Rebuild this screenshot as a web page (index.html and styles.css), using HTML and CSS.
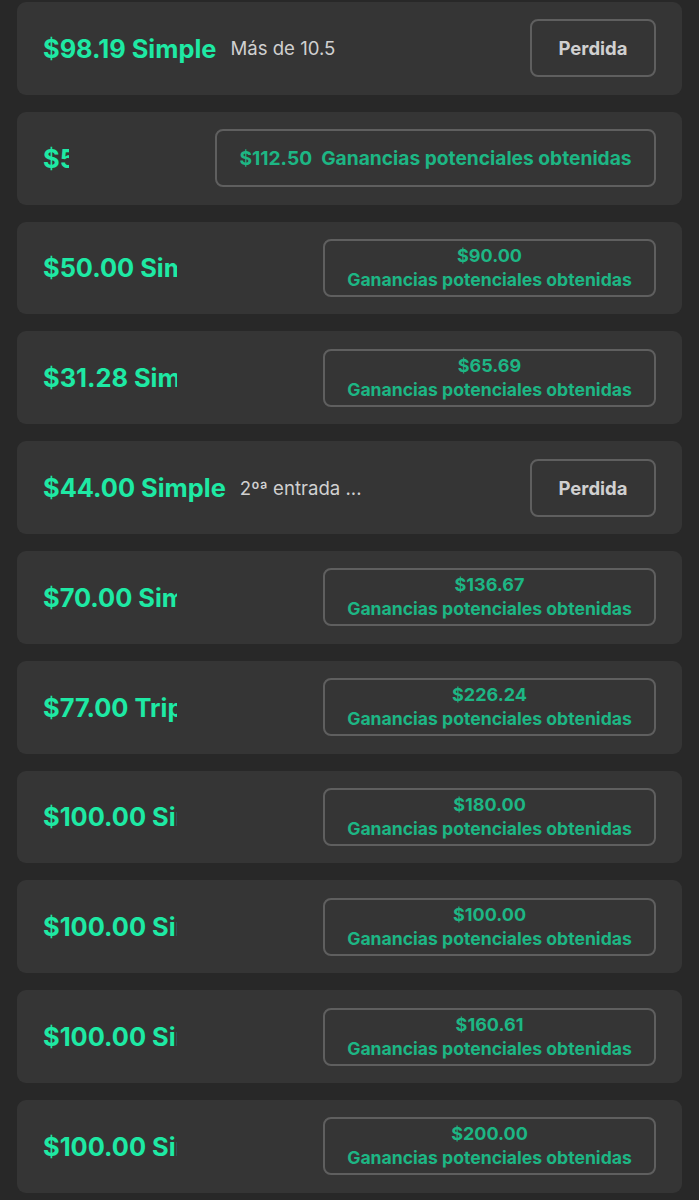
FILE: index.html
```html
<!DOCTYPE html>
<html lang="es">
<head>
  <meta charset="UTF-8">
  <meta name="viewport" content="width=device-width, initial-scale=1.0">
  <title>Mis apuestas</title>
  <link rel="stylesheet" href="styles.css">
</head>
<body>
  <div class="bet-list">
    <div class="bet-card">
      <div class="bet-title">$98.19 Simple</div>
      <div class="bet-sub">Más de 10.5</div>
      <div class="bet-status lost">Perdida</div>
    </div>

    <div class="bet-card won">
      <div class="bet-title clip">$50.00 Simple</div>
      <div class="bet-status win inline">$112.50&nbsp; Ganancias potenciales obtenidas</div>
    </div>

    <div class="bet-card won">
      <div class="bet-title clip">$50.00 Simple</div>
      <div class="bet-status win">
        <span class="win-amount">$90.00</span>
        <span class="win-label">Ganancias potenciales obtenidas</span>
      </div>
    </div>

    <div class="bet-card won">
      <div class="bet-title clip">$31.28 Simple</div>
      <div class="bet-status win">
        <span class="win-amount">$65.69</span>
        <span class="win-label">Ganancias potenciales obtenidas</span>
      </div>
    </div>

    <div class="bet-card">
      <div class="bet-title">$44.00 Simple</div>
      <div class="bet-sub">2ºª entrada ...</div>
      <div class="bet-status lost">Perdida</div>
    </div>

    <div class="bet-card won">
      <div class="bet-title clip">$70.00 Simple</div>
      <div class="bet-status win">
        <span class="win-amount">$136.67</span>
        <span class="win-label">Ganancias potenciales obtenidas</span>
      </div>
    </div>

    <div class="bet-card won">
      <div class="bet-title clip">$77.00 Triple</div>
      <div class="bet-status win">
        <span class="win-amount">$226.24</span>
        <span class="win-label">Ganancias potenciales obtenidas</span>
      </div>
    </div>

    <div class="bet-card won">
      <div class="bet-title clip">$100.00 Simple</div>
      <div class="bet-status win">
        <span class="win-amount">$180.00</span>
        <span class="win-label">Ganancias potenciales obtenidas</span>
      </div>
    </div>

    <div class="bet-card won">
      <div class="bet-title clip">$100.00 Simple</div>
      <div class="bet-status win">
        <span class="win-amount">$100.00</span>
        <span class="win-label">Ganancias potenciales obtenidas</span>
      </div>
    </div>

    <div class="bet-card won">
      <div class="bet-title clip">$100.00 Simple</div>
      <div class="bet-status win">
        <span class="win-amount">$160.61</span>
        <span class="win-label">Ganancias potenciales obtenidas</span>
      </div>
    </div>

    <div class="bet-card won">
      <div class="bet-title clip">$100.00 Simple</div>
      <div class="bet-status win">
        <span class="win-amount">$200.00</span>
        <span class="win-label">Ganancias potenciales obtenidas</span>
      </div>
    </div>
  </div>
</body>
</html>
```

FILE: styles.css
```css
body {
  background-color: #282828;
  font-family: 'Inter', 'Liberation Sans', sans-serif;
  margin: 0;
  padding: 0;
  color: #fff;
}

.bet-list {
  display: flex;
  flex-direction: column;
  gap: 17px;
  padding: 2px 17px 0;
}

.bet-card {
  height: 92.8px;
  box-sizing: border-box;
  background-color: #353535;
  border-radius: 9px;
  padding: 0 26px;
  display: flex;
  align-items: center;
}

.bet-title {
  color: #1ee9a4;
  font-size: 25.4px;
  font-weight: 700;
  white-space: nowrap;
}

.bet-title.clip {
  flex: 1;
  min-width: 0;
  overflow: hidden;
  margin-right: 146px;
}

.bet-sub {
  color: #d0d0d0;
  font-size: 18.6px;
  margin-left: 14px;
  white-space: nowrap;
}

.bet-status {
  height: 58px;
  box-sizing: border-box;
  border: 2px solid #5f5f5f;
  border-radius: 8px;
  display: flex;
  flex-direction: column;
  align-items: center;
  justify-content: center;
  flex-shrink: 0;
  margin-left: auto;
}

.bet-status.lost {
  width: 126px;
  color: #d0d0d0;
  font-size: 18.5px;
  font-weight: 700;
}

.bet-status.win {
  width: 333px;
  color: #1db684;
  font-size: 17.6px;
  font-weight: 700;
  line-height: 24px;
  white-space: nowrap;
}

.bet-status.inline {
  width: 441px;
  flex-direction: row;
  font-size: 19.2px;
}

.win-amount {
  font-size: 18px;
}
```
